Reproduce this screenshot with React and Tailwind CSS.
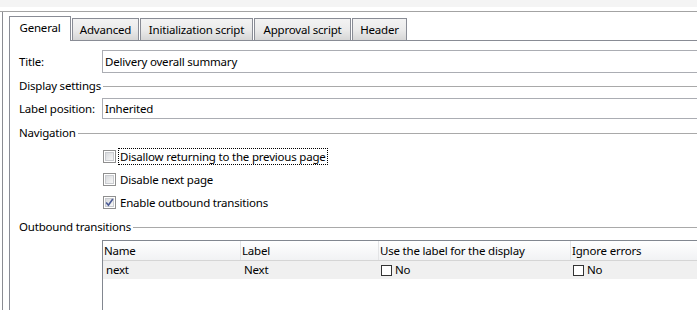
import React from 'react';

const font = 'font-["Noto_Sans",sans-serif] text-[11.5px] tracking-[-0.2px] text-black leading-none';

const tabs = [
    { label: 'General', w: 'w-[62px]', active: true },
    { label: 'Advanced', w: 'w-[67px]' },
    { label: 'Initialization script', w: 'w-[113px]' },
    { label: 'Approval script', w: 'w-[97px]' },
    { label: 'Header', w: 'w-[55px]' },
];

// Vista style checkbox
const CheckBox = ({ checked }) => (
    <span className="w-[13px] h-[13px] border border-[#8f8f8f] bg-white flex items-center justify-center shrink-0">
        <span className="w-[9px] h-[9px] border border-[#c9cbcf] bg-gradient-to-br from-[#d8dadd] to-[#f7f7f7] flex items-center justify-center">
            {checked && (
                <svg width="9" height="9" viewBox="0 0 9 9" className="overflow-visible">
                    <path d="M1.2 4.6 L3.4 7.2 L7.8 1" fill="none" stroke="#4a5a95" strokeWidth="1.6" />
                </svg>
            )}
        </span>
    </span>
);

const GroupTitle = ({ children }) => (
    <div className="h-[18px] flex items-center gap-[2px]">
        <span>{children}</span>
        <div className="flex-1 h-px bg-[#a9a9a9]" />
    </div>
);

const FieldRow = ({ label, value, h }) => (
    <div className={`flex items-center ${h}`}>
        <span className="w-[83px] shrink-0">{label}</span>
        <div className="flex-1 h-full border border-[#abadb3] border-r-0 bg-white flex items-center pl-[2px]">
            {value}
        </div>
    </div>
);

const SmallBox = () => (
    <span className="w-[11px] h-[11px] border border-[#333] bg-white shrink-0" />
);

const App = () => {
    return (
        <div className={`w-[697px] h-[310px] bg-white overflow-hidden flex flex-col ${font}`}>
            {/* Top strip */}
            <div className="h-[7px] bg-[#f4f4f4] shrink-0" />
            <div className="h-[4px] shrink-0" />

            {/* Outer frame */}
            <div className="flex-1 flex border-t border-[#a3a3a3] pl-[2px] min-h-0">
                <div className="flex-1 flex border-l border-[#8a8c92] pl-[6px] min-h-0">
                    <div className="flex-1 flex flex-col min-h-0">
                        {/* Tabs */}
                        <div className="h-[28px] flex items-end gap-[1px] shrink-0">
                            {tabs.map((t) =>
                                t.active ? (
                                    <div
                                        key={t.label}
                                        className={`${t.w} h-[25px] -mb-px relative z-10 bg-white border border-b-0 border-[#898c95] flex items-center justify-center pb-[2px]`}
                                    >
                                        {t.label}
                                    </div>
                                ) : (
                                    <div
                                        key={t.label}
                                        className={`${t.w} h-[22px] border border-b-0 border-[#898c95] bg-gradient-to-b from-[#f3f3f3] via-[#ebebeb] to-[#d6d6d6] flex items-center justify-center`}
                                    >
                                        {t.label}
                                    </div>
                                )
                            )}
                        </div>

                        {/* Panel */}
                        <div className="flex-1 border-t border-l border-[#898c95] pl-[9px] flex flex-col min-h-0">
                            <div className="mt-[9px]">
                                <FieldRow label="Title:" value="Delivery overall summary" h="h-[23px]" />
                            </div>
                            <div className="mt-[4px]">
                                <GroupTitle>Display settings</GroupTitle>
                            </div>
                            <div className="mt-[3px]">
                                <FieldRow label="Label position:" value="Inherited" h="h-[21px]" />
                            </div>
                            <div className="mt-[5px]">
                                <GroupTitle>Navigation</GroupTitle>
                            </div>

                            <div className="mt-[3px] pl-[84px] flex flex-col">
                                <div className="h-[23px] flex items-center">
                                    <CheckBox />
                                    <span className="ml-[2px] border border-dotted border-black px-[1px] h-[17px] flex items-center">
                                        Disallow returning to the previous page
                                    </span>
                                </div>
                                <div className="h-[23px] flex items-center">
                                    <CheckBox />
                                    <span className="ml-[4px]">Disable next page</span>
                                </div>
                                <div className="h-[23px] flex items-center">
                                    <CheckBox checked />
                                    <span className="ml-[4px]">Enable outbound transitions</span>
                                </div>
                            </div>

                            <div className="mt-[4px]">
                                <GroupTitle>Outbound transitions</GroupTitle>
                            </div>

                            {/* Table */}
                            <div className="mt-[4px] ml-[83px] flex-1 border-t border-l border-[#828790] flex flex-col">
                                <div className="h-[20px] flex bg-gradient-to-b from-white to-[#f1f2f4] border-b border-[#d5d5d5] shrink-0">
                                    <div className="w-[138px] border-r border-[#e3e4e6] flex items-center pl-[1px]">Name</div>
                                    <div className="w-[138px] border-r border-[#e3e4e6] flex items-center pl-[1px]">Label</div>
                                    <div className="w-[192px] border-r border-[#e3e4e6] flex items-center pl-[1px]">Use the label for the display</div>
                                    <div className="flex-1 flex items-center pl-[1px]">Ignore errors</div>
                                </div>
                                <div className="h-[18px] flex bg-[#f0f0f0] shrink-0">
                                    <div className="w-[138px] flex items-center pl-[3px]">next</div>
                                    <div className="w-[138px] flex items-center pl-[3px]">Next</div>
                                    <div className="w-[192px] flex items-center pl-[2px] gap-[3px]">
                                        <SmallBox />
                                        No
                                    </div>
                                    <div className="flex-1 flex items-center pl-[2px] gap-[3px]">
                                        <SmallBox />
                                        No
                                    </div>
                                </div>
                            </div>
                        </div>
                    </div>
                </div>
            </div>
        </div>
    );
};

export default App;
